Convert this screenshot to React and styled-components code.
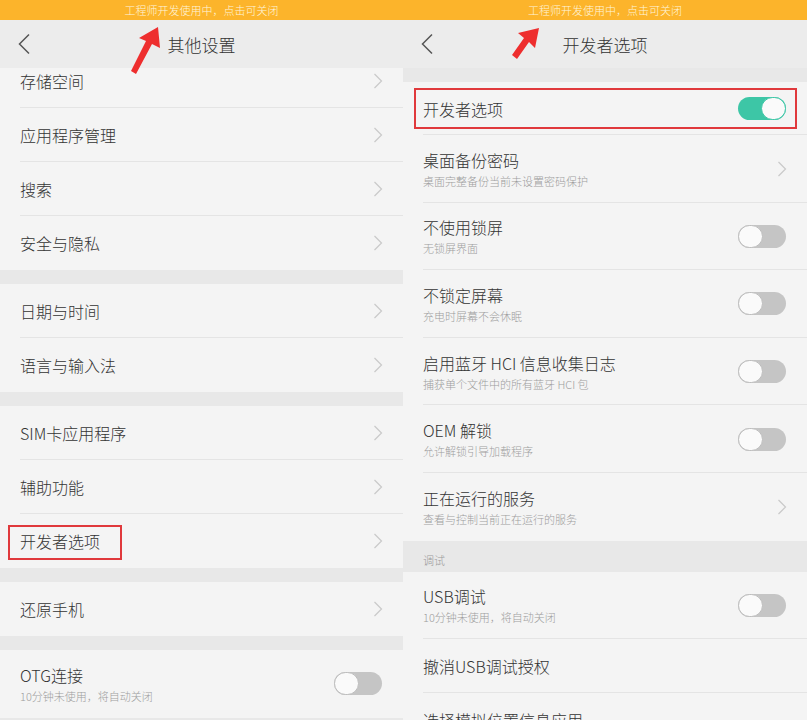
import React from 'react';
import styled, { createGlobalStyle } from 'styled-components';

const GlobalStyle = createGlobalStyle`
  html, body { margin: 0; padding: 0; background: #f4f4f4; }
  body { font-family: "Noto Sans CJK SC", "Noto Sans", sans-serif; font-weight: 300; }
  * { box-sizing: border-box; }
`;

const Page = styled.div`
  width: 807px;
  height: 720px;
  display: flex;
  overflow: hidden;
`;

const Phone = styled.div`
  position: relative;
  width: ${p => p.$w}px;
  height: 720px;
  display: flex;
  flex-direction: column;
  background: #f4f4f4;
  overflow: hidden;
`;

const Banner = styled.div`
  height: 20px;
  flex: none;
  background: #fcb42b;
  color: #fff5dc;
  font-size: 11px;
  line-height: 20px;
  text-align: center;
`;

const Header = styled.div`
  height: 48px;
  flex: none;
  background: #ececec;
  display: flex;
  align-items: center;
  justify-content: center;
  position: relative;
  color: #333;
  font-size: 17px;
`;

const Back = styled.svg`
  position: absolute;
  left: 17px;
  top: 13px;
`;

const Body = styled.div`
  flex: 1;
  overflow: hidden;
`;

const Scroll = styled.div`
  margin-top: ${p => p.$offset || 0}px;
`;

const Gap = styled.div`
  height: 14px;
  background: #e8e8e8;
`;

const SectionTitle = styled.div`
  height: 31px;
  background: #e8e8e8;
  color: #9a9a9a;
  font-size: 11px;
  padding: 11px 0 0 20px;
`;

const Row = styled.div`
  position: relative;
  height: ${p => p.$h}px;
  display: flex;
  align-items: center;
  padding: 0 20px 0 20px;
  &::after {
    content: '';
    display: ${p => (p.$last ? 'none' : 'block')};
    position: absolute;
    left: 20px;
    right: 0;
    bottom: 0;
    height: 1px;
    background: #e4e4e4;
  }
`;

const Texts = styled.div`
  flex: 1;
  display: flex;
  flex-direction: column;
`;

const Title = styled.div`
  font-size: 16px;
  color: #333;
  line-height: 22px;
`;

const Sub = styled.div`
  font-size: 11px;
  color: #9d9d9d;
  line-height: 16px;
  margin-top: 2px;
`;

const Track = styled.div`
  width: 48px;
  height: 23px;
  border-radius: 12px;
  background: ${p => (p.$on ? '#3dc6a6' : '#c5c5c5')};
  display: flex;
  justify-content: ${p => (p.$on ? 'flex-end' : 'flex-start')};
  margin-right: 1px;
`;

const Knob = styled.div`
  width: 25px;
  height: 23px;
  border-radius: 12px;
  background: #fafafa;
  border: 1px solid ${p => (p.$on ? '#3dc6a6' : '#bdbdbd')};
`;

const Highlight = styled.div`
  position: absolute;
  border: 2px solid #e0393c;
  pointer-events: none;
`;

const Arrow = styled.svg`
  position: absolute;
  left: 0;
  top: 0;
  pointer-events: none;
`;

const Chevron = () => (
  <svg width="10" height="16" viewBox="0 0 10 16">
    <polyline points="1.5,1 8.5,8 1.5,15" fill="none" stroke="#c9c9c9" strokeWidth="1.2" />
  </svg>
);

const Switch = ({ on }) => (
  <Track $on={on}>
    <Knob $on={on} />
  </Track>
);

const Item = ({ title, sub, chevron, toggle, on, last, box, h }) => (
  <Row $h={h || (sub ? 67.6 : 54)} $last={last}>
    <Texts>
      <Title>{title}</Title>
      {sub && <Sub>{sub}</Sub>}
    </Texts>
    {chevron && <Chevron />}
    {toggle && <Switch on={on} />}
    {box && <Highlight style={box} />}
  </Row>
);

const TopBar = ({ title }) => (
  <>
    <Banner>工程师开发使用中，点击可关闭</Banner>
    <Header>
      <Back width="14" height="22" viewBox="0 0 14 22">
        <polyline points="12,1.5 2.5,11 12,20.5" fill="none" stroke="#555" strokeWidth="1.5" />
      </Back>
      {title}
    </Header>
  </>
);

export default function App() {
  return (
    <Page>
      <GlobalStyle />
      <Phone $w={403}>
        <TopBar title="其他设置" />
        <Body>
          <Scroll $offset={-14}>
            <Item title="存储空间" chevron />
            <Item title="应用程序管理" chevron />
            <Item title="搜索" chevron />
            <Item title="安全与隐私" chevron last />
            <Gap />
            <Item title="日期与时间" chevron />
            <Item title="语言与输入法" chevron last />
            <Gap />
            <Item title="SIM卡应用程序" chevron />
            <Item title="辅助功能" chevron />
            <Item
              title="开发者选项"
              chevron
              last
              box={{ left: 8, top: 11, width: 114, height: 35 }}
            />
            <Gap />
            <Item title="还原手机" chevron last />
            <Gap />
            <Item title="OTG连接" sub="10分钟未使用，将自动关闭" toggle last />
            <Gap />
          </Scroll>
        </Body>
        <Arrow width="200" height="80" viewBox="0 0 200 80">
          <polygon points="158,27 160,48 152,44 136,74 131,71 146,41 139,38" fill="#ee2e2e" />
        </Arrow>
      </Phone>
      <Phone $w={404}>
        <TopBar title="开发者选项" />
        <Body>
          <Gap />
          <Item
            title="开发者选项"
            toggle
            on
            h={53}
            box={{ left: 11, top: 6, width: 383, height: 41 }}
          />
          <Item title="桌面备份密码" sub="桌面完整备份当前未设置密码保护" chevron />
          <Item title="不使用锁屏" sub="无锁屏界面" toggle />
          <Item title="不锁定屏幕" sub="充电时屏幕不会休眠" toggle />
          <Item title="启用蓝牙 HCI 信息收集日志" sub="捕获单个文件中的所有蓝牙 HCI 包" toggle />
          <Item title="OEM 解锁" sub="允许解锁引导加载程序" toggle />
          <Item title="正在运行的服务" sub="查看与控制当前正在运行的服务" chevron last />
          <SectionTitle>调试</SectionTitle>
          <Item title="USB调试" sub="10分钟未使用，将自动关闭" toggle />
          <Item title="撤消USB调试授权" />
          <Item title="选择模拟位置信息应用" />
        </Body>
        <Arrow width="200" height="80" viewBox="0 0 200 80">
          <polygon points="136,28 132,48 126,42 114,59 109,55 121,38 115,33" fill="#ee2e2e" />
        </Arrow>
      </Phone>
    </Page>
  );
}
